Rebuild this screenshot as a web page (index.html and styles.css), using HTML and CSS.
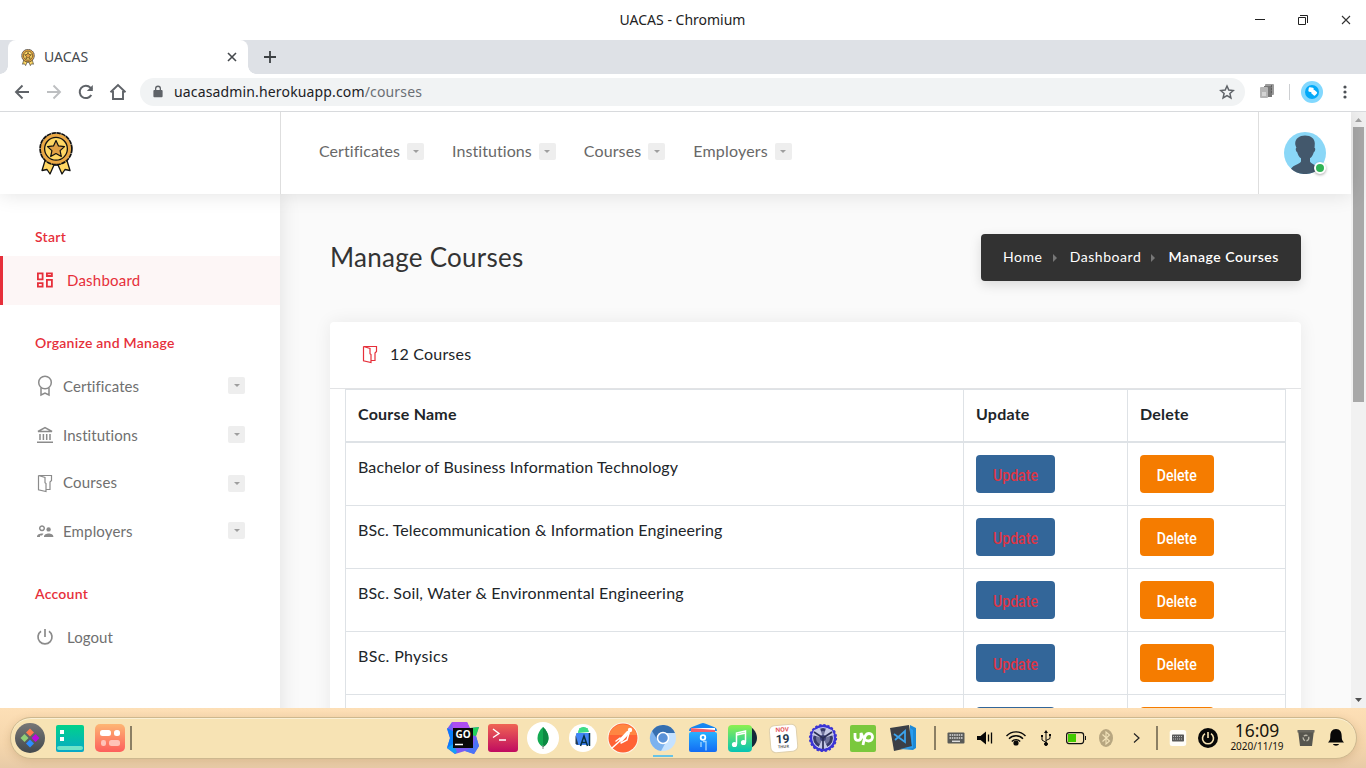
FILE: index.html
```html
<!DOCTYPE html>
<html lang="en">
<head>
<meta charset="utf-8">
<title>UACAS</title>
<link rel="stylesheet" href="styles.css">
</head>
<body>
<svg class="defs" width="0" height="0">
  <symbol id="medal" viewBox="0 0 34 43">
    <path d="M6.500 27 3 38.500l5-1 3 4.500 4-9h4l4 9 3-4.500 5 1-3.500-11.500z" fill="#ffd764" stroke="#111" stroke-width="1.300" stroke-linejoin="round"/>
    <circle cx="17" cy="16.800" r="15.400" fill="#eaa844"/>
    <circle cx="17" cy="16.800" r="15.900" fill="none" stroke="#111" stroke-width="1.700" stroke-dasharray="4.500 .49"/>
    <circle cx="17" cy="16.800" r="11.400" fill="#ffd764" stroke="#111" stroke-width="1.300"/>
    <path d="m17 8.500 2.500 5.400 6 .7-4.400 4 1.200 6-5.300-3-5.300 3 1.200-6-4.400-4 6-.7z" fill="#e0a045" stroke="#111" stroke-width="1.200" stroke-linejoin="round"/>
  </symbol>
  <symbol id="book" viewBox="0 0 16 19">
    <path d="M1.500 1.500v14.300l7.500 1.700V9.500l-1-.7V3.500L1.500 1.500h13v5l-1.500 1.500V15.500H9" fill="none" stroke="currentColor" stroke-width="1.200"/>
  </symbol>
  <symbol id="power" viewBox="0 0 18 18">
    <path d="M9 1v8M5 3.200a7 7 0 1 0 8 0" fill="none" stroke="currentColor" stroke-width="1.700"/>
  </symbol>
</svg>

<header class="titlebar">
  <span class="title">UACAS - Chromium</span>
  <div class="win-buttons">
    <svg width="12" height="12"><path d="M1 5.500h10" stroke="#222"/></svg>
    <svg width="12" height="12"><path d="M1.500 3.500h7v7h-7zM3 1.500h7.500V9" fill="none" stroke="#222"/></svg>
    <svg width="12" height="12"><path d="m2 2 8 8M10 2l-8 8" stroke="#333" stroke-width="1.100"/></svg>
  </div>
</header>
<div class="tabs">
  <div class="tab">
    <svg class="favicon" width="14" height="17"><use href="#medal"/></svg>
    <span class="tab-name">UACAS</span>
    <svg width="10" height="10"><path d="m1 1 8 8M9 1 1 9" stroke="#45494d" stroke-width="1.600"/></svg>
  </div>
  <svg class="newtab" width="14" height="14"><path d="M7 1v12M1 7h12" stroke="#3c4043" stroke-width="1.800"/></svg>
</div>
<div class="toolbar">
  <div class="nav-buttons">
    <svg width="16" height="16" fill="none" stroke="#5f6368" stroke-width="1.900"><path d="M15 8H2M8.500 1.500 2 8l6.500 6.500"/></svg>
    <svg width="16" height="16" fill="none" stroke="#bdbfc1" stroke-width="1.900"><path d="M1 8h13M7.500 1.500 14 8l-6.500 6.500"/></svg>
    <svg width="16" height="16" fill="none" stroke="#5f6368" stroke-width="2"><path d="M13.300 11A6.200 6.200 0 1 1 12.400 3.600L14 5.200"/><path d="M14.800 1v6h-6z" fill="#5f6368" stroke="none"/></svg>
    <svg class="home" width="18" height="18" fill="none" stroke="#5f6368" stroke-width="1.900"><path d="M1.500 9.300 9 2l7.500 7.300M4 8v8h10V8"/></svg>
  </div>
  <div class="omnibox">
    <svg width="10" height="13" fill="#5f6368"><path d="M1.300 5H2V3.600a3 3 0 0 1 6 0V5h.7a.9.900 0 0 1 .9.900v5.400a.9.900 0 0 1-.9.900H1.300a.9.900 0 0 1-.9-.9V5.900A.9.900 0 0 1 1.300 5zm2-0h3.400V3.600a1.700 1.700 0 0 0-3.400 0z"/></svg>
    <span class="url">uacasadmin.herokuapp.com<span class="path">/courses</span></span>
    <svg width="16" height="16" fill="none" stroke="#5f6368" stroke-width="1.500"><path d="m8 2 1.800 4.100 4.500.4-3.400 3 1 4.400L8 11.600 4.100 13.900l1-4.400-3.400-3 4.500-.4z"/></svg>
  </div>
  <svg class="ext" width="16" height="15"><rect x="6" y="0" width="9" height="11" rx="1" fill="#9b9b9b"/><rect x="5" y="2" width="8" height="11" fill="#777"/><rect x="1" y="3" width="8" height="11" rx="1" fill="#b5b5b5"/><path d="M3 8h4v4H3z" fill="#d4d4d4"/><path d="M12 2h1M12 5h1M12 8h1" stroke="#555" stroke-width="1.500"/></svg>
  <span class="tool-sep"></span>
  <svg class="profile" width="22" height="22"><circle cx="11" cy="11" r="11" fill="#82d8fe"/><circle cx="11" cy="11" r="7" fill="#03a9f8"/><rect x="7.500" y="6.500" width="5" height="4.500" rx="1" fill="#fff" transform="rotate(10 10 9)"/><rect x="10.500" y="9.500" width="5" height="4.500" rx="1" fill="#fff" transform="rotate(40 13 12)"/></svg>
  <svg class="dots" width="4" height="16" fill="#4d5156"><circle cx="2" cy="3" r="1.600"/><circle cx="2" cy="8" r="1.600"/><circle cx="2" cy="13" r="1.600"/></svg>
</div>

<div class="viewport">
  <div class="site">
    <header class="site-header">
      <div class="brand"><svg width="34" height="43"><use href="#medal"/></svg></div>
      <nav class="main-nav">
        <a class="n1"><span>Certificates</span><i class="drop"></i></a>
        <a class="n2"><span>Institutions</span><i class="drop"></i></a>
        <a class="n3"><span>Courses</span><i class="drop"></i></a>
        <a class="n4"><span>Employers</span><i class="drop"></i></a>
      </nav>
      <div class="account">
        <div class="avatar">
          <svg width="42" height="42"><circle cx="21" cy="21" r="21" fill="#8ad7f7"/><path d="M21 3.500c6 0 9.800 3 9.800 8 0 1.600-.2 3-.3 4.500 1.300 0 .8 3.600-.7 4.200-.7 2.600-2 4.600-3.800 6.100v3.200c1.500 2.500 6.500 3.500 9 7.200A21 21 0 0 1 7 36.700c2.500-3.700 8.500-4.700 10-7.200v-3.200c-2-1.500-3.100-3.500-3.800-6.100-1.500-.6-2-4.200-.7-4.200-.5-1.500-1.300-3-1.300-4.500 0-5 4.300-8 9.800-8z" fill="#43586c"/></svg>
          <span class="online"></span>
        </div>
      </div>
    </header>
    <div class="body">
      <aside class="sidebar">
        <h3>Start</h3>
        <a class="item active wide"><svg width="18" height="18" fill="none" stroke="currentColor" stroke-width="1.800"><path d="M1.900 2.400h4.700v6H1.900zM10.900 2.400h5v2.600h-5zM1.900 12.200h4.700v3.400H1.900zM10.900 8.900h5v6.700h-5z"/></svg><span class="s-dash">Dashboard</span></a>
        <h3 class="gap">Organize and Manage</h3>
        <a class="item"><svg width="18" height="22" fill="none" stroke="currentColor" stroke-width="1.500"><circle cx="9" cy="7.500" r="6.300"/><path d="M5 13V20l4-2 4 2V13"/></svg><span>Certificates</span><i class="drop"></i></a>
        <a class="item"><svg width="18" height="18" fill="none" stroke="currentColor" stroke-width="1.500"><path d="M2 5.500h14L9 1.700zM1 16.200h16M4 8v6M7.400 8v6M10.700 8v6M14 8v6"/></svg><span>Institutions</span><i class="drop"></i></a>
        <a class="item short"><svg width="18" height="19"><use href="#book" x="1" width="16" height="19"/></svg><span>Courses</span><i class="drop"></i></a>
        <a class="item last"><svg width="18" height="14" fill="currentColor"><path d="M6 2a2.300 2.300 0 1 0 .01 0z" fill="none" stroke="currentColor" stroke-width="1.500"/><circle cx="12.600" cy="5.400" r="2.200"/><path d="M1 13c0-2.800 3.500-3.700 6.500-3.300L6 11.500H4V13zM8 13c0-2.400 2.500-3.400 4.700-3.400s4.700 1 4.700 3.400z"/></svg><span>Employers</span><i class="drop"></i></a>
        <h3 class="gap">Account</h3>
        <a class="item wide"><svg width="18" height="18"><use href="#power"/></svg><span>Logout</span></a>
      </aside>
      <main class="main">
        <div class="page-head">
          <h1>Manage Courses</h1>
          <div class="crumbs"><a class="c1">Home</a><i></i><a class="c2">Dashboard</a><i></i><b>Manage Courses</b></div>
        </div>
        <section class="card">
          <div class="card-head"><svg width="16" height="19"><use href="#book"/></svg><span>12 Courses</span></div>
          <table>
            <thead><tr><th class="name">Course Name</th><th class="upd">Update</th><th class="del">Delete</th></tr></thead>
            <tbody>
              <tr><td>Bachelor of Business Information Technology</td><td><button class="btn update"><span>Update</span></button></td><td><button class="btn delete"><span>Delete</span></button></td></tr>
              <tr><td>BSc. Telecommunication &amp; Information Engineering</td><td><button class="btn update"><span>Update</span></button></td><td><button class="btn delete"><span>Delete</span></button></td></tr>
              <tr><td class="looser">BSc. Soil, Water &amp; Environmental Engineering</td><td><button class="btn update"><span>Update</span></button></td><td><button class="btn delete"><span>Delete</span></button></td></tr>
              <tr><td class="loosest">BSc. Physics</td><td><button class="btn update"><span>Update</span></button></td><td><button class="btn delete"><span>Delete</span></button></td></tr>
              <tr><td></td><td><button class="btn update"></button></td><td><button class="btn delete"></button></td></tr>
            </tbody>
          </table>
        </section>
      </main>
    </div>
  </div>
  <div class="scrollbar">
    <svg width="15" height="15"><path d="M4 10h7L7.500 6z" fill="#a3a3a3"/></svg>
    <div class="thumb"></div>
    <svg class="down" width="15" height="15"><path d="M4 5h7l-3.500 4z" fill="#505050"/></svg>
  </div>
</div>

<footer class="desktop">
  <div class="dock">
    <div class="slots">
      <svg viewBox="0 0 40 40"><defs><linearGradient id="g1" x2="0" y2="1"><stop stop-color="#777"/><stop offset="1" stop-color="#43494d"/></linearGradient></defs><circle cx="20" cy="20" r="15" fill="url(#g1)"/><path d="m20 10.500 4 4-4 4-4-4z" fill="#ff7a4d"/><path d="m14.500 16 4 4-4 4-4-4z" fill="#90ce76"/><path d="m25.500 16 4 4-4 4-4-4z" fill="#bd0bdc"/><path d="m20 21.500 4 4-4 4-4-4z" fill="#2e8cff"/></svg>
      <svg viewBox="0 0 40 40"><defs><linearGradient id="g2" x2="0" y2="1"><stop stop-color="#00d28a"/><stop offset="1" stop-color="#08a8c8"/></linearGradient></defs><rect x="6" y="7" width="28" height="27" rx="2" fill="url(#g2)"/><path d="M10 12h4v4h-4zM10 19h4v4h-4z" fill="#fff"/><rect x="7" y="28" width="26" height="4" rx="2" fill="#6fe3c8"/></svg>
      <svg viewBox="0 0 40 40"><defs><linearGradient id="g3" x2="0" y2="1"><stop stop-color="#fdb673"/><stop offset="1" stop-color="#fd5f5c"/></linearGradient></defs><rect x="5" y="6" width="30" height="28" rx="5" fill="url(#g3)"/><rect x="10" y="12" width="11" height="6" rx="2.500" fill="#fff"/><rect x="24" y="12" width="6" height="6" rx="2.500" fill="#fff"/><rect x="11" y="22" width="5" height="6" rx="2.200" fill="#ffc3b8"/><rect x="19" y="22" width="11" height="6" rx="2.500" fill="#ffc3b8"/></svg>
      <span class="bar"></span>
    </div>
    <div class="slots apps">
      <svg viewBox="0 0 40 40"><path d="M9 4h15l3 6 9-1-3 9 3 10-5 8-9-3-10 3-8-6 3-10-3-9z" fill="#7b5cf5"/><path d="m9 4 15 0 3 7H10z" fill="#ae4df2"/><path d="m4 10 6 3v14l-6 3 3-10z" fill="#087cfa"/><path d="m4 30 6-4 4 8-2 2z" fill="#13a0f5"/><path d="m36 9-3 9-6-1V10z" fill="#22d35a"/><path d="m33 18 3 10-5 8-9-3 8-4z" fill="#4a75f6"/><path d="M10 10h20v20H10z" fill="#090909"/><text x="20" y="20" text-anchor="middle" class="go">GO</text><path d="M12 26.500h8" stroke="#fff" stroke-width="1.500"/></svg>
      <svg viewBox="0 0 40 40"><defs><linearGradient id="g5" x2="0" y2="1"><stop stop-color="#ef6553"/><stop offset="1" stop-color="#c00b60"/></linearGradient></defs><rect x="5" y="6" width="30" height="28" rx="3" fill="url(#g5)"/><path d="m10 11 6 4.500-6 4M16 22h7" stroke="#fff" fill="none" stroke-width="1.400"/></svg>
      <svg viewBox="0 0 40 40"><circle cx="20" cy="20" r="16" fill="#fff"/><path d="M20 9c3 3 5.500 6.500 5.500 11S23 27 20 29c-3-2-5.500-4.500-5.500-9S17 12 20 9z" fill="#13aa52"/><path d="M20 9c3 3 5.500 6.500 5.500 11S23 27 20 29z" fill="#0d8a43"/><path d="M20 27v4" stroke="#888"/></svg>
      <svg viewBox="0 0 40 40"><circle cx="20" cy="20" r="14" fill="#fff"/><path d="M15 15a5.500 5.500 0 0 1 11-1z" fill="#3ddc84"/><path d="m16.500 10 2 3M24.500 10l-2 3" stroke="#3ddc84"/><rect x="13" y="15" width="14" height="12" rx="1" fill="#4285f4"/><path d="m12.500 17 3 10-3-1z" fill="#223a52"/><path d="m17.500 28 3.500-10 3.500 10M19 24.500h4M26.500 15v13" stroke="#073042" stroke-width="1.500" fill="none"/></svg>
      <svg viewBox="0 0 40 40"><circle cx="20" cy="20" r="15.500" fill="#fff" opacity=".75"/><circle cx="20" cy="20" r="14.500" fill="#ff6235"/><path d="M6 17a14.500 14.500 0 0 1 28 0z" fill="#ff8642"/><circle cx="27" cy="12" r="2.200" fill="#fff"/><path d="m25 14.500-7 7.500" stroke="#fff" stroke-width="3.500" stroke-linecap="round"/><path d="m18 22-9 8M26 15l-2 7-6 3M17 20l-4 3" stroke="#fff" stroke-width="1.500" fill="none" stroke-linecap="round"/></svg>
      <svg viewBox="0 0 40 40"><circle cx="20" cy="20" r="13" fill="#c5e2ff"/><path d="M20 20 9 13a13 13 0 0 0 9 20l5-9z" fill="#7cb2ee"/><path d="M9 13a13 13 0 0 1 23 2H20l-6 6z" fill="#366faf"/><circle cx="20" cy="20" r="5.500" fill="#5a92d8" stroke="#fff" stroke-width="1.500"/><path d="M10 38h20" stroke="#67c3e6" stroke-width="2"/></svg>
      <svg viewBox="0 0 40 40"><defs><linearGradient id="g6" x2="0" y2="1"><stop stop-color="#28b0ff"/><stop offset="1" stop-color="#126cf4"/></linearGradient></defs><path d="M6 13q0-3 3-4l9-3.500q2-.8 4 0L31 9q3 1 3 4z" fill="#1686f2"/><path d="M8 10h24v6H8z" fill="#fff"/><path d="m8 10 24 2v2H8z" fill="#f35c6d"/><rect x="6" y="14" width="28" height="20" rx="2" fill="url(#g6)"/><circle cx="20" cy="19.500" r="2.300" fill="none" stroke="#fff" stroke-width="1.800"/><path d="M18 24v5M20 23.500h3v9" stroke="#a3d6ff" stroke-width="1.300" fill="none"/></svg>
      <svg viewBox="0 0 40 40"><defs><linearGradient id="g7" x2="0" y2="1"><stop stop-color="#8cf04f"/><stop offset="1" stop-color="#06c4b5"/></linearGradient></defs><path d="M24 8c5 0 10 6 10 12s-5 11-10 11z" fill="#15283a"/><rect x="5" y="7" width="24" height="27" rx="4" fill="url(#g7)"/><path d="M13.500 26V15l9-2v11M13.500 17l9-2" stroke="#fff" stroke-width="1.500" fill="none"/><circle cx="11.500" cy="26.500" r="2.600" fill="#fff"/><circle cx="20.500" cy="24.500" r="2.600" fill="#fff"/></svg>
      <svg viewBox="0 0 40 40"><rect x="7" y="7" width="27" height="27" rx="5" fill="#fff" stroke="#dfd0ad" transform="rotate(-5 20 20)"/><g text-anchor="middle" transform="rotate(-3 20 20)"><text x="19.500" y="13.500" class="cal-m">NOV</text><text x="19.500" y="25" class="cal-d">19</text><text x="20" y="30" class="cal-w">THUR</text></g></svg>
      <svg viewBox="0 0 40 40"><circle cx="20" cy="20" r="12" fill="#dfe1ff" stroke="#3b34d4" stroke-width="2.500"/><circle cx="20" cy="20" r="13.200" fill="none" stroke="#3b34d4" stroke-width="1.800" stroke-dasharray="2.300 1.840"/><circle cx="20" cy="20" r="10" fill="#383b69"/><path d="M20 20 9 17l2-5 6-2zM20 20l11-3-2-5-6-2zM20 20l-5 10h10z" fill="#c6c9e6"/><circle cx="20" cy="20" r="7" fill="#c6c9e6" opacity=".4"/><circle cx="20" cy="20" r="3" fill="#3f427d"/><path d="M20 20 11 14M20 20l9-6M20 20v11" stroke="#2c2f56" stroke-width="1.700"/></svg>
      <svg viewBox="0 0 40 40"><rect x="7" y="7" width="26" height="27" rx="2" fill="#7ac83d"/><path d="M12 15v4c0 4.500 6 4.500 6 0v-4c2 5 4 8 7.500 8 5 0 5.500-7.500.5-7.500-4 0-4.500 4-6 11.500" stroke="#fff" stroke-width="2.800" fill="none"/></svg>
      <svg viewBox="0 0 40 40"><path d="m27 7 6 3v20l-3 2-12-1 8-1z" fill="#1e8ad6"/><path d="m7 10 19-3 3 22-18 4z" fill="#3b3f46"/><path d="m27 10 3 2v18l-13 1 12-3z" fill="#2a9df0"/><path d="m11 16 11 8V13L12 22" stroke="#3ba3ec" stroke-width="1.800" fill="none"/></svg>
    </div>
    <div class="slots tray">
      <span class="bar"></span>
      <svg viewBox="0 0 30 40"><rect x="6.500" y="14.500" width="17" height="11" rx="1" fill="#595a58"/><path d="M8.500 17h13M8.500 20h13" stroke="#ddd" stroke-width="1.500" stroke-dasharray="1.500 .8"/><path d="M11 23.300h8" stroke="#ddd" stroke-width="1.500"/></svg>
      <svg viewBox="0 0 30 40"><path d="M6 18h3.500l5.500-4.500v13L9.500 22H6z" fill="#080808"/><path d="M17.500 16.500v7M20.500 14.500v11" stroke="#080808" stroke-width="1.300"/></svg>
      <svg viewBox="0 0 30 40" fill="none" stroke="#080808" stroke-width="1.400"><path d="M5.500 18a13 13 0 0 1 19 0M8 20.800a9.500 9.500 0 0 1 14 0M10.800 23.400a5.800 5.800 0 0 1 8.400 0"/><circle cx="15" cy="25" r="1.900" fill="#080808"/></svg>
      <svg viewBox="0 0 30 40" fill="none" stroke="#080808"><path d="M15 14v12M15 24.500l-4-2.500v-3M15 22.500l4-2v-3"/><path d="m13 15 2-3 2 3zM10 17h2v2h-2zM18 16h2v2h-2z" fill="#080808" stroke="none"/><circle cx="15" cy="26" r="1.500" fill="#080808"/></svg>
      <svg viewBox="0 0 30 40"><rect x="5.600" y="14.600" width="17" height="11" rx="2.500" fill="none" stroke="#111" stroke-width="1.200"/><path d="M7 16h8v8H7z" fill="#43ca00"/><path d="M24.500 18v4" stroke="#111"/></svg>
      <svg viewBox="0 0 30 40"><ellipse cx="15" cy="20" rx="7" ry="9" fill="#b7a680"/><path d="m11.500 16.500 7 6.500-3.500 3V14l3.500 3-7 6.500" fill="none" stroke="#f2e2b9" stroke-width="1.100"/></svg>
      <svg viewBox="0 0 30 40"><path d="m13 15.500 5 4.500-5 4.500" fill="none" stroke="#222" stroke-width="1.200"/></svg>
      <span class="bar"></span>
      <svg viewBox="0 0 30 40"><rect x="6.700" y="12" width="16.500" height="16" rx="2.500" fill="#fffdf8"/><rect x="9" y="16.500" width="12" height="7" rx=".7" fill="#595959"/><path d="M10 18.500h10M10 21h10" stroke="#bbb" stroke-dasharray="1 1"/></svg>
      <svg viewBox="0 0 30 40"><circle cx="15" cy="20" r="10" fill="#080808"/><path d="M15 14v6M12 15.700a5.500 5.500 0 1 0 6 0" fill="none" stroke="#f7e3b3" stroke-width="1.600"/></svg>
      <div class="clock"><span class="time">16:09</span><span class="date">2020/11/19</span></div>
      <svg viewBox="0 0 30 40"><path d="M7 12h16l-2 16H9z" fill="#57564f"/><path d="M6.500 12h17v2.500h-17z" fill="#69675f"/><circle cx="15" cy="20" r="2.800" fill="none" stroke="#bbb8aa" stroke-width="1.400" stroke-dasharray="3.800 1.500"/></svg>
      <svg viewBox="0 0 30 40"><path d="M15 11c4 0 5.700 3 5.700 7 0 3 .3 4.500 2.300 6.500H7c2-2 2.300-3.500 2.300-6.500 0-4 1.700-7 5.700-7zM12 26h6c-.5 2.300-5.500 2.300-6 0z" fill="#080808"/></svg>
    </div>
  </div>
</footer>
</body>
</html>
```
FILE: styles.css
```css
* { box-sizing: border-box; }
body { margin: 0; width: 1366px; height: 768px; overflow: hidden; display: flex; flex-direction: column; font: 16px/24px Lato, "Open Sans", sans-serif; color: #212529; background: #fff; }
svg { display: block; flex: none; }
.defs { position: absolute; }

/* Browser window */
.titlebar { height: 40px; display: flex; align-items: center; justify-content: center; position: relative; font: 14px/20px "Noto Sans", sans-serif; color: #222; flex: none; }
.title { margin-right: 1px; }
.win-buttons { position: absolute; right: 14px; top: 14px; display: flex; gap: 31px; }
.tabs { height: 34px; flex: none; background: #dee1e6; padding-left: 8px; display: flex; align-items: center; }
.tab { width: 240px; height: 34px; background: #fff; border-radius: 8px 8px 0 0; display: flex; align-items: center; padding: 0 11px 0 13px; position: relative; font: 14px/20px "Noto Sans", sans-serif; color: #45494d; }
.tab::before, .tab::after { content: ""; position: absolute; bottom: 0; width: 8px; height: 8px; }
.tab::before { left: -8px; background: radial-gradient(circle at 0 0, #dee1e6 7.5px, #fff 8px); }
.tab::after { right: -8px; background: radial-gradient(circle at 100% 0, #dee1e6 7.5px, #fff 8px); }
.tab-name { margin-left: 9px; flex: 1; }
.newtab { margin-left: 15px; }
.toolbar { height: 38px; flex: none; display: flex; align-items: center; padding: 0 19px 2px 14px; border-bottom: 1px solid #d8dadd; }
.nav-buttons { display: flex; gap: 16px; width: 126px; align-items: center; flex: none; }
.home { margin-left: -1px; }
.omnibox { width: 1105px; flex: none; height: 28px; border-radius: 14px; background: #f1f3f4; display: flex; align-items: center; padding: 0 10px 0 13px; }
.url { margin-left: 11px; flex: 1; font: 14px/20px "Noto Sans", sans-serif; letter-spacing: .15px; color: #202124; }
.path { color: #6b6f74; }
.ext { margin-left: 14px; }
.tool-sep { width: 1px; height: 16px; background: #cdcfd2; margin-left: 14px; }
.profile { margin-left: 11px; }
.dots { margin-left: 20px; }

/* Site */
.viewport { height: 596px; flex: none; display: flex; overflow: hidden; }
.site { width: 1351px; display: flex; flex-direction: column; background: #fafafa; }
.site-header { height: 82px; flex: none; display: flex; background: #fff; box-shadow: 0 0 20px rgba(0,0,0,.12); position: relative; z-index: 2; }
.brand { width: 281px; border-right: 1px solid #dedede; padding: 20px 0 0 39px; }
.main-nav { flex: 1; display: flex; padding: 31px 0 0 38px; color: #686868; gap: 28px; }
.main-nav a { display: flex; gap: 7px; }
.main-nav span { line-height: 16px; }
.n1, .n2 { letter-spacing: .06px; }
.n3 { letter-spacing: .13px; }
.n4 { letter-spacing: .18px; }
.drop { width: 17px; height: 17px; border-radius: 2px; background: #eee; display: flex; align-items: center; justify-content: center; flex: none; }
.drop::before { content: ""; border: 3.5px solid transparent; border-top-color: #9e9e9e; border-bottom: 0; }
.account { width: 93px; border-left: 1px solid #dedede; padding: 20px 0 0 25px; }
.avatar { position: relative; width: 42px; }
.online { position: absolute; left: 30px; top: 30px; width: 12px; height: 12px; border-radius: 50%; background: #30b455; border: 2px solid #fff; box-shadow: 0 1px 3px rgba(0,0,0,.35); }
.body { flex: 1; display: flex; }
.sidebar { width: 280px; flex: none; background: #fff; box-shadow: 0 0 20px rgba(0,0,0,.11); padding-top: 24px; }
.sidebar h3 { margin: 0; height: 38px; padding-left: 35px; font-size: 14px; line-height: 38px; font-weight: 600; color: #e62f3a; letter-spacing: .25px; }
.sidebar .gap { margin-top: 19px; }
.item { height: 49px; display: flex; align-items: center; padding: 0 35px 2px 36px; font-size: 15px; color: #707070; letter-spacing: .06px; }
.item svg { color: #8b8b8b; }
.item span { flex: 1; margin-left: 9px; }
.item.wide span { margin-left: 13px; }
.item .s-dash { letter-spacing: .22px; }
.item.short { height: 47px; padding-bottom: 1px; letter-spacing: .15px; }
.short span { padding-bottom: 2px; }
.last { letter-spacing: .15px; }
.item.active { padding-left: 33px; border-left: 3px solid #e62f3a; background: #fdf6f6; color: #e62f3a; }
.item.active svg { color: #e62f3a; }
.main { flex: 1; padding: 40px 50px 0; }
.page-head { display: flex; justify-content: space-between; height: 47px; }
h1 { margin: 0; font-size: 26px; line-height: 47px; font-weight: 400; color: #333; letter-spacing: .27px; }
.crumbs { width: 320px; background: #323232; border-radius: 4px; color: #fff; font-size: 14px; padding: 0 22px 2px; display: flex; align-items: center; justify-content: space-between; box-shadow: 0 4px 12px rgba(0,0,0,.13); }
.crumbs i { border: 4px solid transparent; border-left-color: #777; border-right: 0; margin: 2px 3px 0 0; }
.c1, .c2, .crumbs b { letter-spacing: .55px; font-weight: 400; }
.crumbs b { font-weight: 600; }
.card { margin-top: 41px; background: #fff; border-radius: 4px; box-shadow: 0 0 18px rgba(0,0,0,.07); height: 500px; }
.card-head { height: 67px; border-bottom: 1px solid #e2e3e5; display: flex; align-items: center; padding: 0 0 2px 32px; color: #e62f3a; }
.card-head span { margin-left: 12px; color: #212529; letter-spacing: .2px; }
table { width: 941px; margin: 0 15px; table-layout: fixed; border-collapse: separate; border-spacing: 0; border: 1px solid #dee2e6; border-right: 0; border-bottom: 0; }
th, td { padding: 12px; text-align: left; vertical-align: top; border: 0 solid #dee2e6; border-width: 0 1px 1px 0; height: 63px; letter-spacing: .13px; }
th { height: 53px; border-bottom-width: 2px; letter-spacing: .23px; }
td.looser { letter-spacing: .17px; }
td.loosest { letter-spacing: .33px; }
.name { width: 618px; }
.upd { width: 164px; }
.del { width: 158px; }
.btn { display: flex; align-items: center; justify-content: center; height: 38px; border: 0; border-radius: 4px; padding: 3px 0 0; font: 500 16px/24px Roboto, sans-serif; }
.btn span { transform: scale(.88, 1.06); }
.update { width: 79px; background: #336699; color: #dc3545; }
.delete { width: 74px; background: #f57c00; color: #fff; }
.scrollbar { width: 15px; background: #f1f1f1; display: flex; flex-direction: column; }
.thumb { width: 11px; height: 275px; margin-left: 2px; background: #a8a8a8; }
.down { margin-top: auto; }

/* Desktop panel */
.desktop { height: 60px; flex: none; background: linear-gradient(#fddfb6, #f5d6ac 60%, #e8cba7); padding: 9px 10px; }
.dock { height: 42px; border: 1px solid #cdb88f; border-radius: 21px; background: #f7e3b4; box-shadow: inset 0 1px #fbf0d5, 0 2px 8px rgba(130,90,40,.2); display: flex; align-items: center; margin-right: -1px; }
.slots { display: flex; align-items: center; height: 40px; margin-left: -1px; }
.slots svg { width: 40px; height: 40px; }
.slots .bar { width: 2px; height: 24px; background: #8b7f64; }
.apps { margin-left: 311px; }
.tray { margin-left: 6px; }
.tray svg { width: 30px; }
.tray .bar { margin: 0 5px; }
.clock { width: 68px; display: flex; flex-direction: column; align-items: center; font-family: "Noto Sans", sans-serif; color: #17140d; }
.time { font-size: 17.5px; line-height: 17px; height: 16px; transform: translateY(-2px); }
.date { font-size: 10px; line-height: 12px; }
.go { font: 700 10px "Open Sans", sans-serif; fill: #fff; }
.cal-m { font: 700 6px "Open Sans", sans-serif; fill: #e55353; }
.cal-d { font: 700 12px Roboto, sans-serif; fill: #26374b; }
.cal-w { font: 700 4px "Open Sans", sans-serif; fill: #666; }
```
